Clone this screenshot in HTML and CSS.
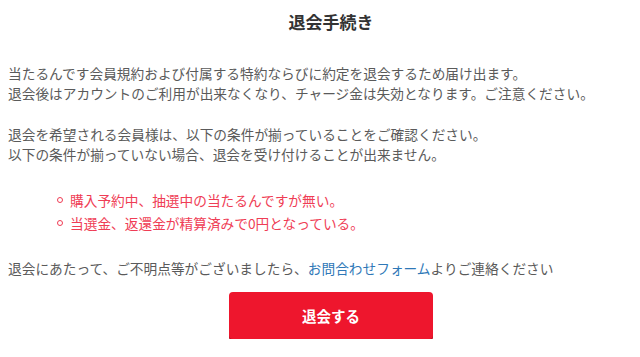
FILE: index.html
```html
<!DOCTYPE html>
<html lang="ja">
<head>
<meta charset="utf-8">
<title>退会手続き</title>
<link rel="stylesheet" href="styles.css">
</head>
<body>
<main class="page">
  <h1 class="title">退会手続き</h1>
  <p class="text">当たるんです会員規約および付属する特約ならびに約定を退会するため届け出ます。<br>退会後はアカウントのご利用が出来なくなり、チャージ金は失効となります。ご注意ください。</p>
  <p class="text">退会を希望される会員様は、以下の条件が揃っていることをご確認ください。<br>以下の条件が揃っていない場合、退会を受け付けることが出来ません。</p>
  <ul class="conditions">
    <li>購入予約中、抽選中の当たるんですが無い。</li>
    <li>当選金、返還金が精算済みで0円となっている。</li>
  </ul>
  <p class="text">退会にあたって、ご不明点等がございましたら、<a class="link" href="#">お問合わせフォーム</a>よりご連絡ください</p>
  <div class="actions">
    <button class="btn" type="button">退会する</button>
  </div>
</main>
</body>
</html>
```

FILE: styles.css
```css
html, body {
  margin: 0;
  padding: 0;
  background: #fff;
  overflow: hidden;
}
.page {
  width: 646px;
  margin-left: 8px;
  font-family: "Noto Sans CJK JP", "Noto Sans", sans-serif;
  color: #5a5a5a;
}
.title {
  margin: 10px 0 0;
  font-size: 17px;
  line-height: 24px;
  font-weight: 700;
  color: #333;
  text-align: center;
}
.text {
  margin: 29px 0 0;
  font-size: 13.7px;
  line-height: 20px;
}
.text + .text { margin-top: 21px; }
.conditions {
  margin: 25px 0 0;
  padding: 0 0 0 62px;
  list-style: none;
  color: #ef3d55;
  font-size: 13.7px;
  line-height: 23px;
}
.conditions li {
  position: relative;
}
.conditions li::before {
  content: "";
  position: absolute;
  left: -13px;
  top: 8px;
  width: 4px;
  height: 4px;
  border: 1.5px solid #ef3d55;
  border-radius: 50%;
}
.conditions + .text { margin-top: 23px; }
.link {
  color: #2f78b7;
  text-decoration: none;
}
.actions {
  display: flex;
  justify-content: center;
  margin-top: 14px;
}
.btn {
  width: 204px;
  height: 47px;
  border: none;
  border-radius: 4px;
  background: #ee162d;
  box-shadow: 0 2px 0 #b8101f;
  color: #fff;
  font-family: "Noto Sans CJK JP", sans-serif;
  font-size: 14.5px;
  font-weight: 700;
}
```
